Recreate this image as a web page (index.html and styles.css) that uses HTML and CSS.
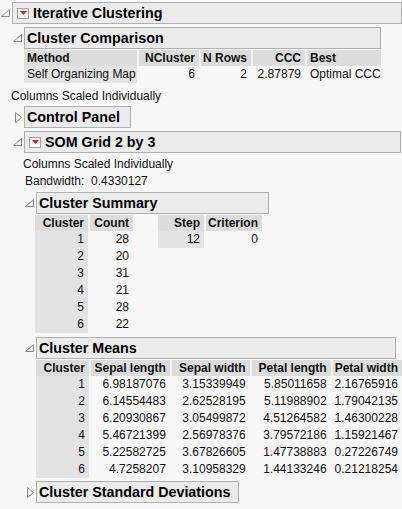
FILE: index.html
```html
<!DOCTYPE html>
<html>
<head>
<meta charset="utf-8">
<link rel="stylesheet" href="styles.css">
</head>
<body>
<div class="outline lvl1">
  <div class="ohead">
    <span class="tri"><svg width="9" height="8" viewBox="0 0 9 8"><path d="M0.5 7.5 L8.5 7.5 L8.5 0.5 Z" fill="#f0f0f0" stroke="#8a8a8a"/></svg></span>
    <div class="obox w-top"><span class="menu"><svg width="7" height="4" viewBox="0 0 7 4"><path d="M0 0 L7 0 L3.5 4 Z" fill="#d81e1e"/></svg></span>Iterative Clustering</div>
  </div>
  <div class="obody">
    <div class="outline">
      <div class="ohead">
        <span class="tri"><svg width="9" height="8" viewBox="0 0 9 8"><path d="M0.5 7.5 L8.5 7.5 L8.5 0.5 Z" fill="#f0f0f0" stroke="#8a8a8a"/></svg></span>
        <div class="obox w-cc">Cluster Comparison</div>
      </div>
      <div class="obody tight">
        <table class="rep cc">
          <colgroup><col style="width:113px"><col style="width:62px"><col style="width:52px"><col style="width:54px"><col style="width:76px"></colgroup>
          <tr><th class="l">Method</th><th>NCluster</th><th>N Rows</th><th>CCC</th><th class="l">Best</th></tr>
          <tr><td class="lab l">Self Organizing Map</td><td>6</td><td>2</td><td>2.87879</td><td class="l">Optimal CCC</td></tr>
        </table>
      </div>
    </div>
    <div class="note first">Columns Scaled Individually</div>
    <div class="outline closed-o after-note">
      <div class="ohead">
        <span class="tri"><svg width="7" height="11" viewBox="0 0 7 11"><path d="M0.5 0.5 L6.5 5.5 L0.5 10.5 Z" fill="#f4f4f4" stroke="#8a8a8a"/></svg></span>
        <div class="obox w-cp">Control Panel</div>
      </div>
    </div>
    <div class="outline">
      <div class="ohead">
        <span class="tri"><svg width="9" height="8" viewBox="0 0 9 8"><path d="M0.5 7.5 L8.5 7.5 L8.5 0.5 Z" fill="#f0f0f0" stroke="#8a8a8a"/></svg></span>
        <div class="obox w-som"><span class="menu"><svg width="7" height="4" viewBox="0 0 7 4"><path d="M0 0 L7 0 L3.5 4 Z" fill="#d81e1e"/></svg></span>SOM Grid 2 by 3</div>
      </div>
      <div class="obody">
        <div class="note">Columns Scaled Individually</div>
        <div class="note bw">Bandwidth:&nbsp; 0.4330127</div>
        <div class="outline">
          <div class="ohead">
            <span class="tri"><svg width="9" height="8" viewBox="0 0 9 8"><path d="M0.5 7.5 L8.5 7.5 L8.5 0.5 Z" fill="#f0f0f0" stroke="#8a8a8a"/></svg></span>
            <div class="obox w-cs">Cluster Summary</div>
          </div>
          <div class="obody tight flexrow">
            <table class="rep">
              <colgroup><col style="width:53px"><col style="width:45px"></colgroup>
              <tr><th>Cluster</th><th>Count</th></tr>
              <tr><td class="lab">1</td><td>28</td></tr>
              <tr><td class="lab">2</td><td>20</td></tr>
              <tr><td class="lab">3</td><td>31</td></tr>
              <tr><td class="lab">4</td><td>21</td></tr>
              <tr><td class="lab">5</td><td>28</td></tr>
              <tr><td class="lab">6</td><td>22</td></tr>
            </table>
            <table class="rep">
              <colgroup><col style="width:46px"><col style="width:58px"></colgroup>
              <tr><th>Step</th><th>Criterion</th></tr>
              <tr><td class="lab">12</td><td>0</td></tr>
            </table>
          </div>
        </div>
        <div class="outline">
          <div class="ohead">
            <span class="tri"><svg width="9" height="8" viewBox="0 0 9 8"><path d="M0.5 7.5 L8.5 7.5 L8.5 0.5 Z" fill="#f0f0f0" stroke="#8a8a8a"/></svg></span>
            <div class="obox w-cm">Cluster Means</div>
          </div>
          <div class="obody tight">
            <table class="rep cm">
              <colgroup><col style="width:53px"><col style="width:81px"><col style="width:80px"><col style="width:81px"><col style="width:66px"></colgroup>
              <tr><th>Cluster</th><th>Sepal length</th><th>Sepal width</th><th>Petal length</th><th>Petal width</th></tr>
              <tr><td class="lab">1</td><td>6.98187076</td><td>3.15339949</td><td>5.85011658</td><td>2.16765916</td></tr>
              <tr><td class="lab">2</td><td>6.14554483</td><td>2.62528195</td><td>5.11988902</td><td>1.79042135</td></tr>
              <tr><td class="lab">3</td><td>6.20930867</td><td>3.05499872</td><td>4.51264582</td><td>1.46300228</td></tr>
              <tr><td class="lab">4</td><td>5.46721399</td><td>2.56978376</td><td>3.79572186</td><td>1.15921467</td></tr>
              <tr><td class="lab">5</td><td>5.22582725</td><td>3.67826605</td><td>1.47738883</td><td>0.27226749</td></tr>
              <tr><td class="lab">6</td><td>4.7258207</td><td>3.10958329</td><td>1.44133246</td><td>0.21218254</td></tr>
            </table>
          </div>
        </div>
        <div class="outline closed-o">
          <div class="ohead">
            <span class="tri"><svg width="7" height="11" viewBox="0 0 7 11"><path d="M0.5 0.5 L6.5 5.5 L0.5 10.5 Z" fill="#f4f4f4" stroke="#8a8a8a"/></svg></span>
            <div class="obox w-csd">Cluster Standard Deviations</div>
          </div>
        </div>
      </div>
    </div>
  </div>
</div>
</body>
</html>
```

FILE: styles.css
```css
html, body {
  margin: 0;
  padding: 0;
  background: #f7f7f7;
}
body {
  font-family: "Liberation Sans", Arial, sans-serif;
  font-size: 12px;
  color: #111;
  padding-top: 2px;
}
.ohead {
  display: flex;
  align-items: center;
}
.tri {
  width: 12px;
  flex: 0 0 12px;
  display: flex;
  justify-content: flex-end;
  padding-right: 2px;
  box-sizing: border-box;
}
.tri svg { display: block; }
.obox {
  box-sizing: border-box;
  height: 22px;
  border: 1px solid #b0b0b0;
  background: #ebebeb;
  font-weight: bold;
  font-size: 14.3px;
  color: #000;
  display: flex;
  align-items: center;
  padding-left: 2px;
  white-space: nowrap;
}
.menu {
  box-sizing: border-box;
  width: 12px;
  height: 11px;
  border: 1px solid #a0a0a0;
  background: #f6f6f6;
  display: inline-flex;
  align-items: center;
  justify-content: center;
  margin-left: 2px;
  margin-right: 4px;
}
.menu svg { display: block; }
.w-top { width: 390px; }
.w-cc { width: 357px; }
.w-cp { width: 107px; }
.w-som { width: 377px; }
.w-cs { width: 233px; }
.w-cm { width: 360px; }
.w-csd { width: 203px; }
.obody {
  margin-left: 12px;
}
.outline { margin-top: 3px; }
.lvl1 { margin-top: 0; }
.obody.tight { padding-top: 1px; margin-left: 12px; }
.flexrow {
  display: flex;
  align-items: flex-start;
  gap: 25px;
}
.obody.flexrow { margin-left: 11px; margin-bottom: 4px; }
table.rep {
  border-collapse: separate;
  border-spacing: 0;
  table-layout: fixed;
}
table.rep th {
  background: #dcdcdc;
  font-weight: bold;
  font-size: 12px;
  height: 16px;
  padding: 0 4px 0 2px;
  text-align: right;
  border-left: 2px solid #f3f3f3;
  white-space: nowrap;
  line-height: 16px;
}
table.rep th:first-child { border-left: none; }
table.rep td {
  height: 17px;
  padding: 0 4px 0 2px;
  text-align: right;
  white-space: nowrap;
  line-height: 17px;
}
table.rep td + td { border-left: 2px solid transparent; }
table.rep td.lab { background: #e3e3e3; }
table.rep .l { text-align: left; padding-left: 3px; }
.cc { width: 357px; }
.note {
  line-height: 16px;
  height: 16px;
}
.note.first { margin-top: 5px; margin-left: -1px; }
.obody > .note:first-child { margin-top: 3px; margin-left: -1px; }
.note.bw { margin-top: 1px; margin-left: 1px; }
.outline.after-note { margin-top: 2px; }
.rep.cm { margin-bottom: 3px; }
```
